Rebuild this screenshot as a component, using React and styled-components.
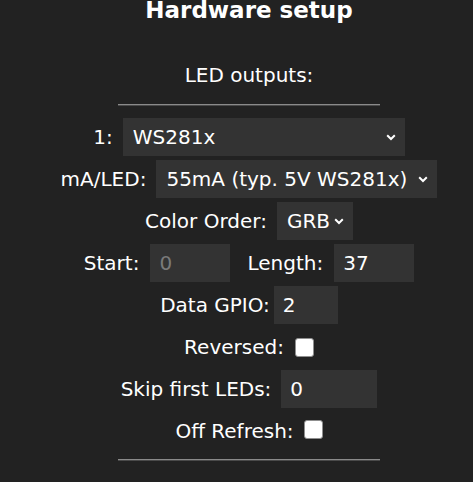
import styled, { createGlobalStyle } from 'styled-components';

const GlobalStyle = createGlobalStyle`
  body {
    margin: 0;
    background: #222;
    color: #fff;
    font-family: "DejaVu Sans", Verdana, sans-serif;
  }
`;

const Page = styled.div`
  padding-left: 25px;
  display: flex;
  flex-direction: column;
  align-items: center;
  overflow: hidden;
`;

const Title = styled.h2`
  margin: 0;
  font-size: 23px;
  line-height: 21px;
  font-weight: bold;
`;

const SubTitle = styled.div`
  margin-top: 33px;
  font-size: 20px;
  line-height: 42px;
`;

const Rule = styled.hr`
  width: 262px;
  height: 0;
  margin: ${(p) => p.$margin};
  border: 0;
  border-top: 1px solid #8a8a8a;
  border-bottom: 1px solid #4a4a4a;
`;

const Row = styled.div`
  height: 42px;
  display: flex;
  align-items: center;
  justify-content: center;
  font-size: 20px;
`;

const Label = styled.span`
  margin-right: ${(p) => p.$gap ?? 10}px;
  margin-left: ${(p) => p.$lead ?? 0}px;
  white-space: nowrap;
`;

const SelectWrap = styled.div`
  position: relative;
  width: ${(p) => p.$w}px;
  height: 38px;
`;

const Select = styled.select`
  appearance: none;
  width: 100%;
  height: 100%;
  border: 0;
  outline: none;
  padding: 0 0 0 10px;
  background: #333;
  color: #fff;
  font-family: inherit;
  font-size: 20px;
`;

const Chevron = styled.svg`
  position: absolute;
  right: 9px;
  top: 16px;
  pointer-events: none;
`;

const NumInput = styled.input`
  box-sizing: border-box;
  width: ${(p) => p.$w}px;
  height: 38px;
  border: 0;
  outline: none;
  padding: 0 0 0 9px;
  background: #333;
  color: ${(p) => (p.disabled ? '#7a7a7a' : '#fff')};
  font-family: inherit;
  font-size: 20px;
  -moz-appearance: textfield;
  &::-webkit-inner-spin-button,
  &::-webkit-outer-spin-button {
    -webkit-appearance: none;
    margin: 0;
  }
`;

const Check = styled.input`
  appearance: none;
  box-sizing: border-box;
  width: 19px;
  height: 19px;
  margin: ${(p) => (p.$raise ? '-4px 0 0' : '0')};
  background: #fff;
  border: 1px solid #8f8f8f;
  border-radius: 3px;
`;

const Dropdown = ({ w, value, options }) => (
  <SelectWrap $w={w}>
    <Select defaultValue={value}>
      {options.map((o) => (
        <option key={o}>{o}</option>
      ))}
    </Select>
    <Chevron width="10" height="7" viewBox="0 0 10 7">
      <path d="M1.2 1.3 L5 5 L8.8 1.3" fill="none" stroke="#fff" strokeWidth="2" />
    </Chevron>
  </SelectWrap>
);

export default function App() {
  return (
    <>
      <GlobalStyle />
      <Page>
        <Title>Hardware setup</Title>
        <SubTitle>LED outputs:</SubTitle>
        <Rule $margin="8px 0 10px" />

        <Row>
          <Label>1:</Label>
          <Dropdown w={282} value="WS281x" options={['WS281x', 'SK6812 RGBW', 'TM1814', 'APA102']} />
        </Row>
        <Row>
          <Label>mA/LED:</Label>
          <Dropdown w={281} value="55mA (typ. 5V WS281x)" options={['55mA (typ. 5V WS281x)', '35mA (eco WS2812)', '30mA (max. 12V)']} />
        </Row>
        <Row>
          <Label>Color Order:</Label>
          <Dropdown w={76} value="GRB" options={['GRB', 'RGB', 'BRG', 'RBG']} />
        </Row>
        <Row>
          <Label $gap={11}>Start:</Label>
          <NumInput type="number" $w={80} defaultValue={0} disabled />
          <Label $lead={17} $gap={11}>Length:</Label>
          <NumInput type="number" $w={80} defaultValue={37} />
        </Row>
        <Row>
          <Label $gap={4}>Data GPIO:</Label>
          <NumInput type="number" $w={64} defaultValue={2} />
        </Row>
        <Row>
          <Label $gap={11}>Reversed:</Label>
          <Check type="checkbox" />
        </Row>
        <Row>
          <Label>Skip first LEDs:</Label>
          <NumInput type="number" $w={96} defaultValue={0} />
        </Row>
        <Row>
          <Label>Off Refresh:</Label>
          <Check type="checkbox" $raise />
        </Row>
        <Rule $margin="7px 0 0" />
      </Page>
    </>
  );
}
